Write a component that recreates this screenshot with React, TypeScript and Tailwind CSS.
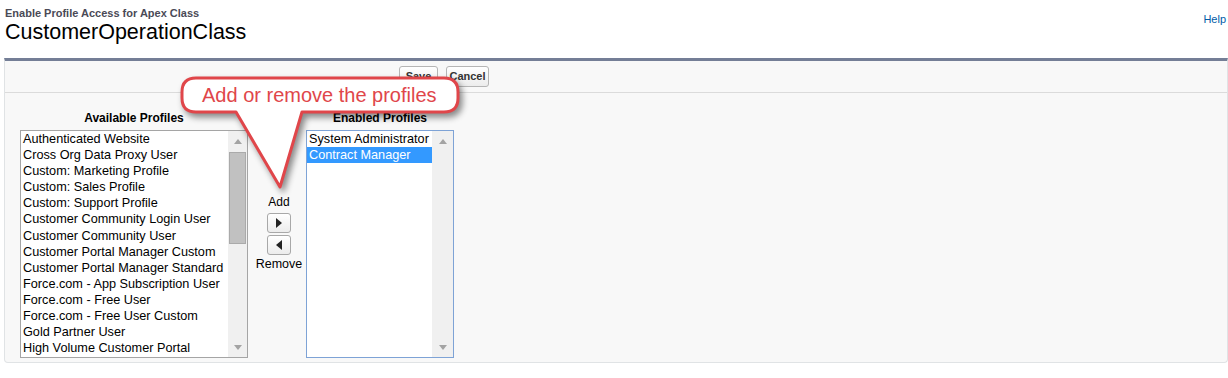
import React from "react";

const available = [
  "Authenticated Website",
  "Cross Org Data Proxy User",
  "Custom: Marketing Profile",
  "Custom: Sales Profile",
  "Custom: Support Profile",
  "Customer Community Login User",
  "Customer Community User",
  "Customer Portal Manager Custom",
  "Customer Portal Manager Standard",
  "Force.com - App Subscription User",
  "Force.com - Free User",
  "Force.com - Free User Custom",
  "Gold Partner User",
  "High Volume Customer Portal",
];

function UpArrow() {
  return (
    <svg width="8" height="5" viewBox="0 0 8 5">
      <polygon points="0,5 8,5 4,0" fill="#a3a3a3" />
    </svg>
  );
}
function DownArrow() {
  return (
    <svg width="8" height="5" viewBox="0 0 8 5">
      <polygon points="0,0 8,0 4,5" fill="#a3a3a3" />
    </svg>
  );
}

export default function App() {
  return (
    <div className="relative w-[1228px] h-[378px] overflow-hidden bg-white font-['Liberation_Sans',Arial,sans-serif] text-black">
      {/* Header */}
      <div className="flex justify-between pl-[5px] pr-[2px] pt-[7px] h-[58px]">
        <div>
          <div className="text-[11px] font-bold leading-[13px] text-[#4a4a56]">
            Enable Profile Access for Apex Class
          </div>
          <div className="text-[21.5px] leading-[25px] text-black">CustomerOperationClass</div>
        </div>
        <a className="text-[11px] leading-[13px] text-[#015ba7] mt-[6px]">Help</a>
      </div>

      {/* Panel */}
      <div className="ml-[4px] h-[305px] bg-[#f8f8f8] border-t-[3px] border-t-[#747e96] border-x border-x-[#e0e3e5] border-b border-b-[#e0e3e5] rounded-b-[4px]">
        {/* button row */}
        <div className="h-[32px] border-b border-b-[#dbdbdb] flex items-start pt-[5px] pl-[394px] gap-[8px]">
          <button className="w-[39px] h-[21px] rounded-[3px] border border-[#b5b5b5] bg-gradient-to-b from-[#ffffff] to-[#ececec] text-[11px] font-bold text-[#333]">
            Save
          </button>
          <button className="w-[43px] h-[21px] rounded-[3px] border border-[#b5b5b5] bg-gradient-to-b from-[#ffffff] to-[#ececec] text-[11px] font-bold text-[#333]">
            Cancel
          </button>
        </div>

        {/* body */}
        <div className="flex pl-[15px] pt-[18px]">
          {/* Available */}
          <div className="w-[228px] flex flex-col">
            <div className="text-[12px] font-bold leading-[14px] text-center mb-[5px]">Available Profiles</div>
            <div className="h-[228px] border border-[#a5a5a5] bg-white flex">
              <div className="flex-1 pl-[2px] overflow-hidden">
                {available.map((p) => (
                  <div key={p} className="text-[12.7px] leading-[16.1px] whitespace-nowrap">
                    {p}
                  </div>
                ))}
              </div>
              <div className="w-[19px] bg-[#f0f0f0] flex flex-col">
                <div className="h-[21px] flex items-center justify-center">
                  <UpArrow />
                </div>
                <div className="h-[92px] mx-[1px] bg-[#c1c1c1] border border-[#aaaaaa]" />
                <div className="flex-1" />
                <div className="h-[20px] flex items-center justify-center">
                  <DownArrow />
                </div>
              </div>
            </div>
          </div>

          {/* Middle */}
          <div className="w-[58px] flex flex-col items-center pl-[4px] pt-[84px]">
            <div className="text-[12px] leading-[14px]">Add</div>
            <button className="mt-[4px] w-[24px] h-[20px] rounded-[3px] border border-[#a8a8a8] bg-gradient-to-b from-[#ffffff] to-[#ececec] flex items-center justify-center">
              <svg width="6" height="10" viewBox="0 0 6 10">
                <polygon points="0,0 6,5 0,10" fill="#222" />
              </svg>
            </button>
            <button className="mt-[2px] w-[24px] h-[20px] rounded-[3px] border border-[#a8a8a8] bg-gradient-to-b from-[#ffffff] to-[#ececec] flex items-center justify-center">
              <svg width="6" height="10" viewBox="0 0 6 10">
                <polygon points="6,0 0,5 6,10" fill="#222" />
              </svg>
            </button>
            <div className="mt-[2px] text-[12.5px] leading-[14px]">Remove</div>
          </div>

          {/* Enabled */}
          <div className="w-[148px] flex flex-col">
            <div className="text-[12px] font-bold leading-[14px] text-center mb-[5px]">Enabled Profiles</div>
            <div className="h-[228px] border border-[#7ea3d6] bg-white flex">
              <div className="flex-1 overflow-hidden">
                <div className="pl-[2px] text-[12.7px] leading-[16.1px] whitespace-nowrap">System Administrator</div>
                <div className="pl-[2px] text-[12.7px] leading-[16.1px] whitespace-nowrap bg-[#3399ff] text-white">
                  Contract Manager
                </div>
              </div>
              <div className="w-[21px] bg-[#f0f0f0] flex flex-col">
                <div className="h-[21px] flex items-center justify-center">
                  <UpArrow />
                </div>
                <div className="flex-1" />
                <div className="h-[20px] flex items-center justify-center">
                  <DownArrow />
                </div>
              </div>
            </div>
          </div>
        </div>
      </div>

      {/* Callout overlay */}
      <svg
        className="absolute left-0 top-0 pointer-events-none drop-shadow-[3px_4px_3px_rgba(0,0,0,0.45)]"
        width="1228"
        height="378"
        viewBox="0 0 1228 378"
      >
        <path
          d="M196 78 H444 Q458 78 458 92 V98 Q458 112 444 112 H302 L280 187 L236 112 H196 Q182 112 182 98 V92 Q182 78 196 78 Z"
          fill="#ffffff"
          stroke="#e0464a"
          strokeWidth="3"
          strokeLinejoin="round"
        />
      </svg>
      <div className="absolute left-[202px] top-[84px] text-[20px] leading-[23px] text-[#e0464a] whitespace-nowrap">
        Add or remove the profiles
      </div>
    </div>
  );
}
